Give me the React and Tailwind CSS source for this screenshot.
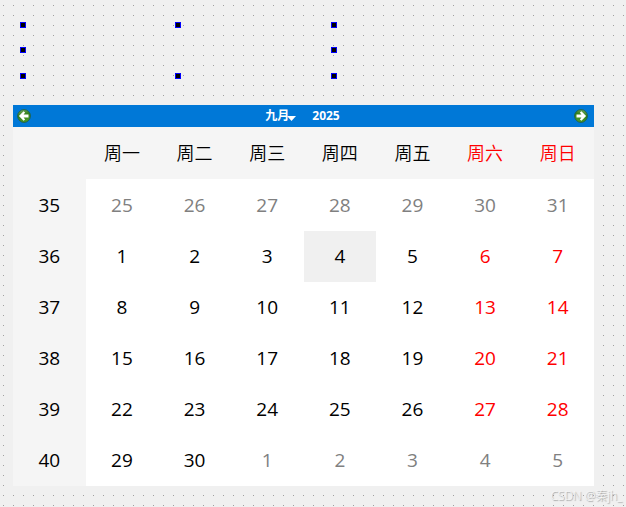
import { useId } from 'react'
import { clsx } from 'clsx'

const WEEKDAYS = ['周一', '周二', '周三', '周四', '周五', '周六', '周日']

const WEEKS = [
  { number: 35, days: [25, 26, 27, 28, 29, 30, 31] },
  { number: 36, days: [1, 2, 3, 4, 5, 6, 7] },
  { number: 37, days: [8, 9, 10, 11, 12, 13, 14] },
  { number: 38, days: [15, 16, 17, 18, 19, 20, 21] },
  { number: 39, days: [22, 23, 24, 25, 26, 27, 28] },
  { number: 40, days: [29, 30, 1, 2, 3, 4, 5] },
]

// Days that belong to the previous or the next month
const isOutside = (week, day) => (week === 0 && day > 7) || (week === 5 && day < 8)

const ArrowIcon = ({ flipped }) => {
  const id = useId()

  return (
    <svg viewBox="0 0 14 14" className={clsx('h-3.5 w-3.5', flipped && '-scale-x-100')}>
      <defs>
        <linearGradient id={id} x1="0" y1="0" x2="0.3" y2="1">
          <stop offset="0" stopColor="#7fb068" />
          <stop offset="0.5" stopColor="#33801b" />
          <stop offset="1" stopColor="#4a9a26" />
        </linearGradient>
      </defs>
      <circle cx="7" cy="7" r="6.4" fill={`url(#${id})`} stroke="#1f5f4a" strokeWidth="0.9" />
      <path d="M1.9 7 L6.6 2.2 L8.1 3.6 L6.6 5.5 H11.5 V8.5 H6.6 L8.1 10.4 L6.6 11.8 Z" fill="#fff" />
    </svg>
  )
}

/**
 * Selection handles around the empty widget
 */
const SelectionFrame = () => (
  <div className="ml-5 grid grid-cols-[155px_156px_6px] grid-rows-[25px_26px_6px]">
    {[0, 1, 2, 3, 4, 5, 6, 7, 8].map((handle) => (
      <span
        key={handle}
        className={clsx('h-1.5 w-1.5', handle !== 4 && 'border border-[#0000ff] bg-black')}
      />
    ))}
  </div>
)

const Calendar = () => (
  <section className="ml-[13px] mr-8 mt-[26px] bg-[#f5f5f5]">
    {/* Navigation bar */}
    <header className="flex h-[22px] items-center justify-between bg-[#0078d7] pl-1 pr-1.5 text-xs font-bold text-white">
      <button type="button" aria-label="上个月">
        <ArrowIcon />
      </button>
      <div className="flex items-center gap-4">
        <button type="button" className="flex items-center">
          九月
          <svg viewBox="0 0 9 5" className="-ml-0.5 mt-1 h-[5px] w-[9px]">
            <path d="M0 0 H9 L4.5 5 Z" fill="#fff" />
          </svg>
        </button>
        <button type="button">2025</button>
      </div>
      <button type="button" aria-label="下个月">
        <ArrowIcon flipped />
      </button>
    </header>

    <table className="w-full table-fixed border-collapse text-center text-[19px] leading-6">
      <thead>
        <tr className="h-[52px] text-lg">
          <td />
          {WEEKDAYS.map((name, index) => (
            <th
              key={name}
              scope="col"
              className={clsx('p-0 font-[350]', index > 4 ? 'text-[#ff0000]' : 'text-black')}
            >
              {name}
            </th>
          ))}
        </tr>
      </thead>
      <tbody>
        {WEEKS.map((week, row) => (
          <tr key={week.number} className="h-[51px] first:h-[52px]">
            <th scope="row" className={clsx('p-0 font-normal text-black', row > 0 && 'pb-0.5')}>
              {week.number}
            </th>
            {week.days.map((day, index) => (
              <td
                key={index}
                className={clsx(
                  'p-0',
                  row > 0 && 'pb-0.5',
                  row === 1 && day === 4 ? 'bg-[#f0f0f0]' : 'bg-white',
                  isOutside(row, day) ? 'text-[#808080]' : index > 4 ? 'text-[#ff0000]' : 'text-black'
                )}
              >
                {day}
              </td>
            ))}
          </tr>
        ))}
      </tbody>
    </table>
  </section>
)

const App = () => (
  <main className="min-h-screen bg-[#f0f0f0] bg-[linear-gradient(to_left,#f0f0f0_9px,transparent_0),linear-gradient(to_bottom,#a0a0a0_1px,transparent_0)] bg-[length:10px_10px] bg-[position:3px_5px] pt-[22px] font-['Open_Sans','Noto_Sans_CJK_SC',sans-serif]">
    <SelectionFrame />
    <Calendar />
    <p className="pr-1 pt-0.5 text-right text-xs font-light leading-4 text-[#f8f8f8] [text-shadow:1px_1px_1px_#909090]">
      CSDN @秦jh_
    </p>
  </main>
)

export default App
